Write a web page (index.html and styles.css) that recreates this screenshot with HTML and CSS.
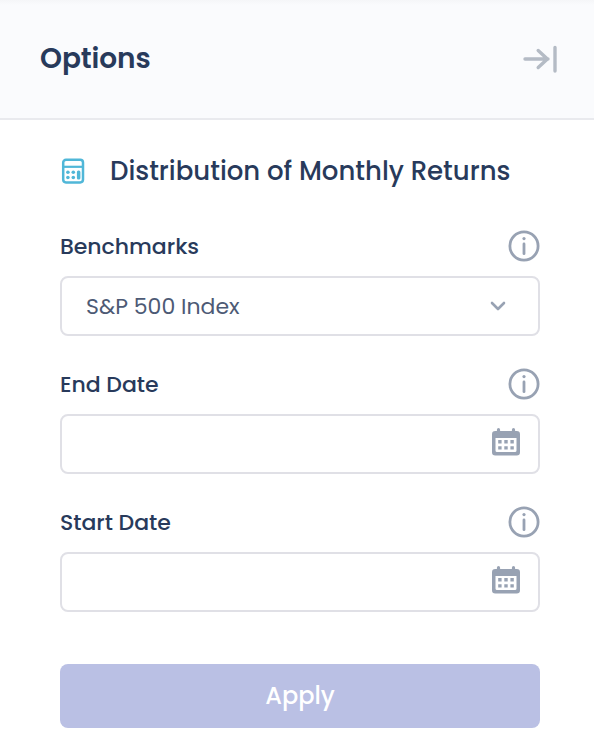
FILE: index.html
```html
<!DOCTYPE html>
<html lang="en">
<head>
<meta charset="utf-8">
<title>Options</title>
<link rel="stylesheet" href="styles.css">
</head>
<body>
<svg class="symbols" aria-hidden="true">
  <symbol id="info" viewBox="0 0 32 32">
    <circle cx="16" cy="16" r="14.1" fill="none" stroke="currentColor" stroke-width="2.8"/>
    <circle cx="16" cy="8.6" r="1.6" fill="currentColor"/>
    <path d="M16 14v9.7" stroke="currentColor" stroke-width="2.8" stroke-linecap="round"/>
  </symbol>
  <symbol id="calendar" viewBox="0 0 28 28">
    <path fill="currentColor" fill-rule="evenodd" d="M4.900 3V1.700a1.600 1.600 0 0 1 3.200 0V3h11.800V1.700a1.600 1.600 0 0 1 3.200 0V3h1.600A3.300 3.300 0 0 1 28 6.300v17.900a3.300 3.300 0 0 1-3.300 3.300H3.300A3.300 3.300 0 0 1 0 24.200V6.300A3.300 3.300 0 0 1 3.300 3ZM3.500 10v12.500a1.500 1.500 0 0 0 1.500 1.500h18a1.500 1.500 0 0 0 1.500-1.500V10Z"/>
    <path fill="currentColor" d="M6.200 12h3.400v3.400H6.200zM12.300 12h3.400v3.400h-3.400zM18.400 12h3.400v3.400h-3.400zM6.200 18.200h3.400v3.400H6.200zM12.300 18.200h3.400v3.400h-3.400zM18.400 18.200h3.400v3.400h-3.400z"/>
  </symbol>
</svg>
<header class="header">
  <h1 class="title">Options</h1>
  <svg class="collapse" viewBox="0 0 36 28" fill="none" stroke="currentColor" stroke-width="3.4" stroke-linecap="round" stroke-linejoin="round"><path d="M3 14h23M16.200 5.500l9.200 8.500-9.200 8.500M33 2.500v23.500"/></svg>
</header>
<main class="panel">
  <div class="section">
    <svg class="section-icon" viewBox="0 0 24 26" fill="none" stroke="currentColor"><rect x="2.200" y="1.800" width="19.800" height="22.600" rx="2.800" stroke-width="2.500"/><path d="M2.200 8.800h19.800" stroke-width="2.200"/><g fill="currentColor" stroke="none"><circle cx="6.900" cy="14.300" r="1.800"/><circle cx="12.300" cy="14.300" r="1.800"/><circle cx="6.900" cy="19.500" r="1.800"/><circle cx="12.300" cy="19.500" r="1.800"/><rect x="15.900" y="12.500" width="3.500" height="8.900" rx="1.500"/></g></svg>
    <h2 class="section-title">Distribution of Monthly Returns</h2>
  </div>
  <div class="field">
    <div class="field-head"><span class="label">Benchmarks</span><svg class="info"><use href="#info"/></svg></div>
    <div class="control select"><span class="value">S&amp;P 500 Index</span><svg class="chevron" viewBox="0 0 16 10" fill="none" stroke="currentColor" stroke-width="2.600" stroke-linecap="round" stroke-linejoin="round"><path d="M2 2l6 6 6-6"/></svg></div>
  </div>
  <div class="field">
    <div class="field-head"><span class="label">End Date</span><svg class="info"><use href="#info"/></svg></div>
    <div class="control"><svg class="calendar"><use href="#calendar"/></svg></div>
  </div>
  <div class="field">
    <div class="field-head"><span class="label">Start Date</span><svg class="info"><use href="#info"/></svg></div>
    <div class="control"><svg class="calendar"><use href="#calendar"/></svg></div>
  </div>
  <button class="apply" type="button">Apply</button>
</main>
</body>
</html>
```
FILE: styles.css
```css
* { box-sizing: border-box; }
body { margin: 0; height: 746px; overflow: hidden; background: #fff; color: #283a5b; font-family: Poppins, Inter, "Open Sans", sans-serif; }
svg { display: block; flex: none; }
h1, h2 { margin: 0; white-space: nowrap; }
.symbols { display: none; }
.header { height: 120px; padding: 0 36px 0 40px; display: flex; align-items: center; justify-content: space-between; border-bottom: 2px solid #e9eaee; background: linear-gradient(#f5f6f8, #fafbfd 5px); }
.title { font-size: 28px; font-weight: 600; line-height: 40px; letter-spacing: -0.1px; }
.collapse { width: 36px; height: 28px; color: #b4bbc5; }
.panel { padding: 31px 54px 0 60px; }
.section { height: 40px; display: flex; align-items: center; }
.section-icon { width: 24px; height: 26px; margin: 0 25px 0 1px; color: #50b7d8; }
.section-title { font-size: 26px; font-weight: 500; line-height: 40px; }
.field { height: 106px; margin-bottom: 32px; }
.section + .field { margin-top: 39px; }
.field-head { height: 32px; margin-bottom: 14px; display: flex; align-items: center; justify-content: space-between; }
.label { padding-top: 2px; font-size: 22px; font-weight: 500; line-height: 32px; letter-spacing: -0.03px; }
.info { width: 32px; height: 32px; color: #98a2b3; }
.control { height: 60px; padding: 0 18px 0 24px; border: 2px solid #e0e0e6; border-radius: 8px; display: flex; align-items: center; justify-content: flex-end; }
.select { justify-content: space-between; padding-right: 32px; }
.value { padding-top: 2px; font-size: 22px; line-height: 32px; color: #4d5a75; }
.chevron { width: 16px; height: 10px; color: #98a2b3; }
.calendar { width: 28px; height: 28px; margin-bottom: 4px; color: #98a2b3; }
.apply { display: block; width: 480px; height: 64px; margin-top: 52px; padding: 0; border: 0; border-radius: 8px; background: #bac0e4; color: #fff; font: 500 24px/64px Poppins, Inter, sans-serif; }
.panel, .header { width: 594px; }
```
